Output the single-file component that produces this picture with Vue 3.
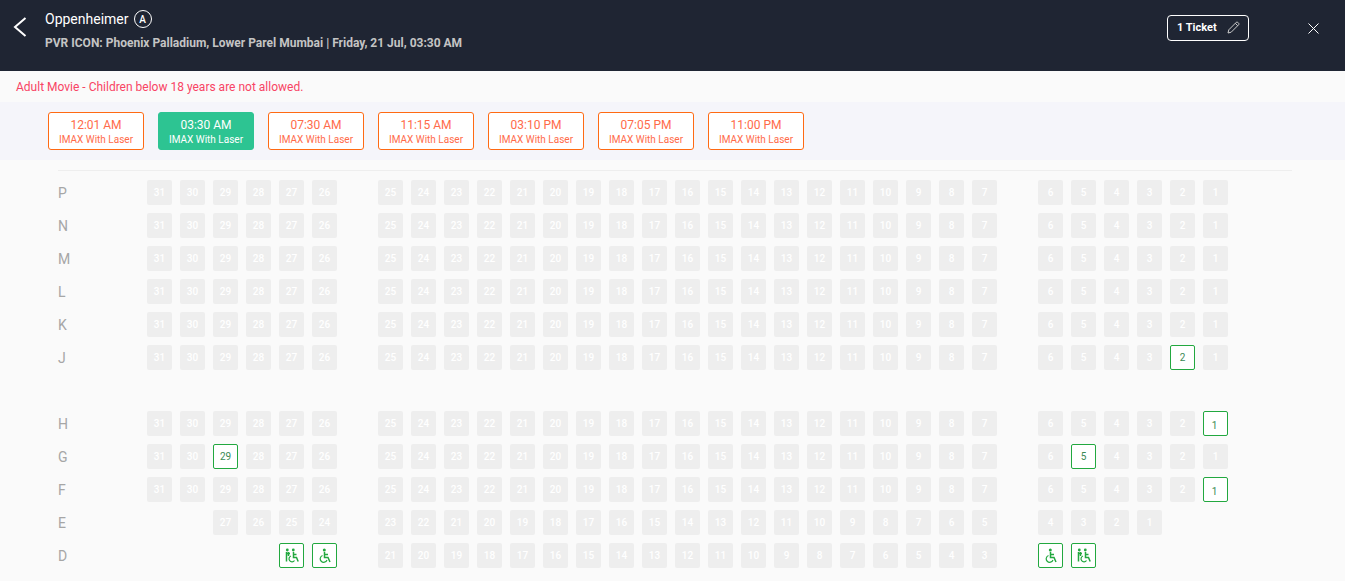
<template>
  <div class="page">
    <header class="top-bar">
      <button class="back">
        <svg width="14" height="20" viewBox="0 0 14 20"><path d="M12.5 1 2 10l10.500 9" fill="none" stroke="#fff" stroke-width="2" /></svg>
      </button>
      <div class="movie">
        <div class="title-row">
          <span class="title">Oppenheimer</span>
          <span class="rating">A</span>
        </div>
        <div class="venue">PVR ICON: Phoenix Palladium, Lower Parel Mumbai | Friday, 21 Jul, 03:30 AM</div>
      </div>
      <div class="ticket">
        <span>1 Ticket</span>
        <svg width="13" height="13" viewBox="0 0 13 13"><path d="M1 12l.8-3.200L9.300 1.300a1 1 0 0 1 1.400 0l1 1a1 1 0 0 1 0 1.400L4.200 11.200zM8.300 2.300l2.400 2.400" fill="none" stroke="#ccc" stroke-width="1" /></svg>
      </div>
      <button class="close">
        <svg width="11" height="11" viewBox="0 0 11 11"><path d="M.5.500l10 10M10.500.500l-10 10" fill="none" stroke="#fff" stroke-width="1" /></svg>
      </button>
    </header>

    <div class="notice">Adult Movie - Children below 18 years are not allowed.</div>

    <div class="shows">
      <div v-for="(t, i) in times" :key="t" class="show" :class="{ active: i === 1 }">
        <span class="time">{{ t }}</span>
        <span class="format">IMAX With Laser</span>
      </div>
    </div>

    <div class="hall">
      <template v-for="row in rows" :key="row.name">
        <div class="row">
          <span class="row-name">{{ row.name }}</span>
          <div class="seats">
            <template v-for="(s, i) in row.seats" :key="i">
              <span v-if="!s" class="gap"></span>
              <span v-else-if="s.wheel" class="seat open">
                <svg v-if="s.wheel === 1" width="13" height="15" viewBox="0 0 13 15">
                  <circle cx="6.300" cy="2" r="1.500" fill="#22a83f" />
                  <path d="M6.500 4v5.500H10l2 4.500M6.500 6.500H10" fill="none" stroke="#22a83f" stroke-width="1.500" />
                  <path d="M4.500 7.500a3.500 3.500 0 1 0 4.500 4.500" fill="none" stroke="#22a83f" stroke-width="1.200" />
                </svg>
                <svg v-else width="15" height="15" viewBox="0 0 15 15">
                  <circle cx="3.300" cy="2" r="1.400" fill="#22a83f" />
                  <path d="M2.500 4v9.500M2.500 5.500h3.500M4.500 4v4" fill="none" stroke="#22a83f" stroke-width="1.500" />
                  <circle cx="9.300" cy="2" r="1.400" fill="#22a83f" />
                  <path d="M9.500 4v5.500h3l1.700 4M9.500 6.500h3" fill="none" stroke="#22a83f" stroke-width="1.500" />
                  <path d="M7 8a3 3 0 1 0 3.500 4.500" fill="none" stroke="#22a83f" stroke-width="1.200" />
                </svg>
              </span>
              <span v-else class="seat" :class="{ open: s.open, low: s.open && s.n === 1 }">{{ s.n }}</span>
            </template>
          </div>
        </div>
        <div v-if="row.name === 'J'" class="aisle"></div>
      </template>
    </div>
  </div>
</template>

<script setup>
const times = ['12:01 AM', '03:30 AM', '07:30 AM', '11:15 AM', '03:10 PM', '07:05 PM', '11:00 PM']

const fullRow = (openSeats = []) => {
  const out = []
  for (let n = 31; n >= 1; n--) {
    out.push({ n, open: openSeats.includes(n) })
    if (n === 26 || n === 7) out.push(null)
  }
  return out
}

const num = (n) => ({ n })
const range = (from, to) => {
  const out = []
  for (let n = from; n >= to; n--) out.push(num(n))
  return out
}

const rowE = [null, null, ...range(27, 24), null, ...range(23, 5), null, ...range(4, 1)]
const rowD = [
  null, null, null, null, { wheel: 2 }, { wheel: 1 }, null,
  ...range(21, 3), null, { wheel: 1 }, { wheel: 2 },
]

const rows = [
  { name: 'P', seats: fullRow() },
  { name: 'N', seats: fullRow() },
  { name: 'M', seats: fullRow() },
  { name: 'L', seats: fullRow() },
  { name: 'K', seats: fullRow() },
  { name: 'J', seats: fullRow([2]) },
  { name: 'H', seats: fullRow([1]) },
  { name: 'G', seats: fullRow([29, 5]) },
  { name: 'F', seats: fullRow([1]) },
  { name: 'E', seats: rowE },
  { name: 'D', seats: rowD },
]
</script>

<style scoped>
.page {
  height: 581px;
  overflow: hidden;
  background: #fafafa;
  font-family: Roboto, "Liberation Sans", sans-serif;
}
.top-bar {
  height: 71px;
  background: #1f2533;
  display: flex;
  align-items: flex-start;
  padding-left: 13px;
  box-sizing: border-box;
}
.back, .close {
  background: none;
  border: 0;
  padding: 0;
  display: flex;
}
.back {
  margin-top: 17px;
}
.movie {
  margin-left: 18px;
  flex: 1;
  padding-top: 10px;
}
.title-row {
  display: flex;
  align-items: center;
  gap: 5px;
  height: 18px;
}
.title {
  color: #fff;
  font-size: 14px;
}
.rating {
  width: 18px;
  height: 18px;
  box-sizing: border-box;
  border: 1px solid #fff;
  border-radius: 50%;
  color: #fff;
  font-size: 10px;
  font-weight: 500;
  display: flex;
  align-items: center;
  justify-content: center;
}
.venue {
  margin-top: 8px;
  color: #c4c4c4;
  font-size: 12px;
  font-weight: 700;
  line-height: 15px;
}
.ticket {
  margin-top: 15px;
  width: 82px;
  height: 26px;
  box-sizing: border-box;
  border: 1px solid #fff;
  border-radius: 4px;
  padding: 0 8px 2px 9px;
  display: flex;
  align-items: center;
  justify-content: space-between;
  color: #fff;
  font-size: 11px;
  font-weight: 700;
}
.close {
  margin: 23px 26px 0 59px;
}
.notice {
  height: 31px;
  padding-left: 16px;
  line-height: 32px;
  color: #f84464;
  font-size: 12px;
}
.shows {
  height: 58px;
  box-sizing: border-box;
  background: #f5f5fa;
  padding: 10px 48px;
  display: flex;
  gap: 14px;
}
.show {
  width: 96px;
  height: 38px;
  box-sizing: border-box;
  border: 1px solid #ff6a13;
  border-radius: 3px;
  background: #fff;
  color: #ff6b4a;
  display: flex;
  flex-direction: column;
  align-items: center;
  padding-top: 5px;
}
.show.active {
  background: #2dc492;
  border-color: #2dc492;
  color: #fff;
}
.time {
  font-size: 12px;
  line-height: 15px;
}
.format {
  font-size: 10px;
  line-height: 13px;
}
.hall {
  margin: 10px 53px 0 58px;
  padding-top: 9px;
  border-top: 1px solid #eeeeee;
  display: flex;
  flex-direction: column;
  gap: 8px;
}
.row {
  display: flex;
  align-items: center;
}
.row-name {
  width: 89px;
  color: #a6a6a6;
  font-size: 14px;
}
.seats {
  display: grid;
  grid-template-columns: repeat(33, 25px);
  column-gap: 8px;
}
.gap {
  height: 25px;
}
.seat {
  height: 25px;
  box-sizing: border-box;
  background: #eeeeee;
  border-radius: 2px;
  color: #fff;
  font-size: 10px;
  font-weight: 500;
  display: flex;
  align-items: center;
  justify-content: center;
}
.seat.open {
  background: #fff;
  border: 1px solid #22a83f;
  color: #3c8a55;
  font-weight: 400;
}
.seat.low {
  padding: 3px 2px 0 0;
}
.aisle {
  height: 25px;
}
</style>
